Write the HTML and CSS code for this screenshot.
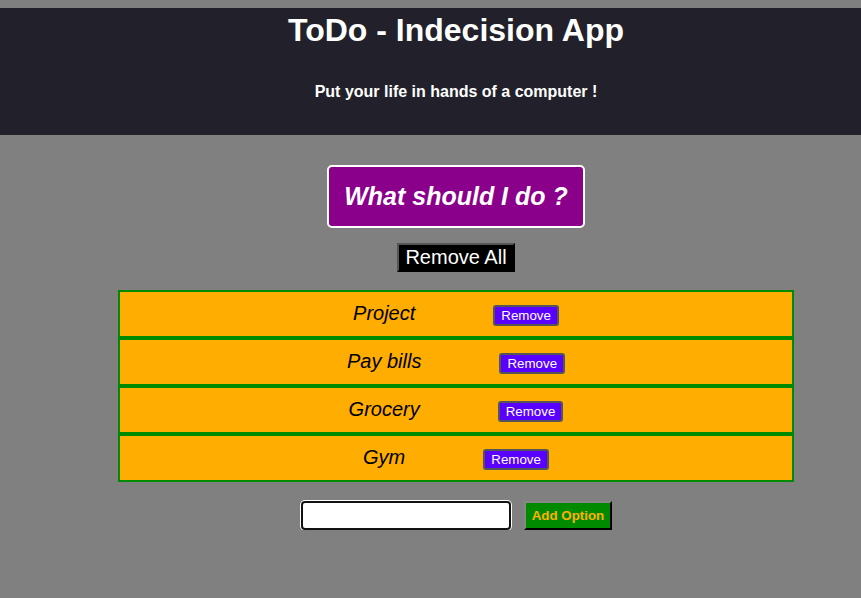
FILE: index.html
```html
<!DOCTYPE html>
<html>
<head>
<meta charset="utf-8">
<title>Indecision App</title>
<link rel="stylesheet" href="styles.css">
</head>
<body>
<div class="app">
  <header class="header">
    <h1 class="title">ToDo - Indecision App</h1>
    <h2 class="subtitle">Put your life in hands of a computer !</h2>
  </header>
  <main class="main">
    <button class="big-button">What should I do ?</button>
    <button class="remove-all">Remove All</button>
    <ul class="options">
      <li class="option"><span class="option-text">Project</span><button class="remove">Remove</button></li>
      <li class="option"><span class="option-text">Pay bills</span><button class="remove">Remove</button></li>
      <li class="option"><span class="option-text">Grocery</span><button class="remove">Remove</button></li>
      <li class="option"><span class="option-text">Gym</span><button class="remove">Remove</button></li>
    </ul>
    <form class="add-form">
      <input class="add-input" type="text" name="option" autofocus>
      <button class="add-button" type="button">Add Option</button>
    </form>
  </main>
</div>
</body>
</html>
```
FILE: styles.css
```css
body {
  margin: 8px 0 0;
  background: #808080;
  font-family: "Liberation Sans", Arial, sans-serif;
}
.header {
  background: #22212b;
  color: #fff;
  text-align: center;
  padding: 0 0 34px 51px;
}
.title {
  margin: 0;
  font-size: 32px;
  font-weight: bold;
  line-height: 44px;
}
.subtitle {
  margin: 31px 0 0;
  font-size: 16px;
  line-height: 18px;
}
.main {
  display: flex;
  flex-direction: column;
  align-items: center;
  padding: 30px 0 0 51px;
}
.big-button {
  font-family: "Liberation Sans", Arial, sans-serif;
  background: #8b008b;
  color: #fff;
  border: 2px solid #fff;
  border-radius: 5px;
  font-size: 25px;
  font-weight: bold;
  font-style: italic;
  line-height: 30px;
  padding: 14px 15px 15px;
  white-space: nowrap;
}
.remove-all {
  margin-top: 15px;
  font-family: "Liberation Sans", Arial, sans-serif;
  font-size: 20px;
  line-height: 23px;
  background: #000;
  color: #fff;
  border: 2px outset #555;
  padding: 1px 6px;
}
.options {
  list-style: none;
  margin: 18px 0 0;
  padding: 0;
  width: 676px;
}
.option {
  display: flex;
  align-items: center;
  justify-content: center;
  gap: 78px;
  height: 44px;
  border: 2px solid #008a00;
  background: #ffad00;
}
.option-text {
  font-size: 20px;
  font-style: italic;
  color: #000;
  margin-top: -2px;
}
.remove {
  font-family: "Liberation Sans", Arial, sans-serif;
  font-size: 13.33px;
  line-height: 15px;
  padding: 1px 6px;
  background: #5a00ff;
  color: #fff;
  border: 2px solid #555;
  border-radius: 3px;
  margin-top: 2px;
}
.add-form {
  display: flex;
  align-items: center;
  gap: 13px;
  margin-top: 18px;
  margin-left: 1px;
}
.add-input {
  box-sizing: border-box;
  width: 210px;
  height: 29px;
  border: 2px solid #111;
  border-radius: 4px;
  box-shadow: 0 0 0 1px #fff;
  background: #fff;
  text-align: center;
  caret-color: #5500ff;
  outline: none;
  font-size: 14px;
  font-family: "Liberation Sans", Arial, sans-serif;
}
.add-button {
  font-family: "Liberation Sans", Arial, sans-serif;
  font-size: 13.33px;
  font-weight: bold;
  line-height: 15px;
  padding: 5px 6px;
  background: #008a00;
  color: #ffb000;
  border: 2px outset #333;
  margin-top: 1px;
}
```
